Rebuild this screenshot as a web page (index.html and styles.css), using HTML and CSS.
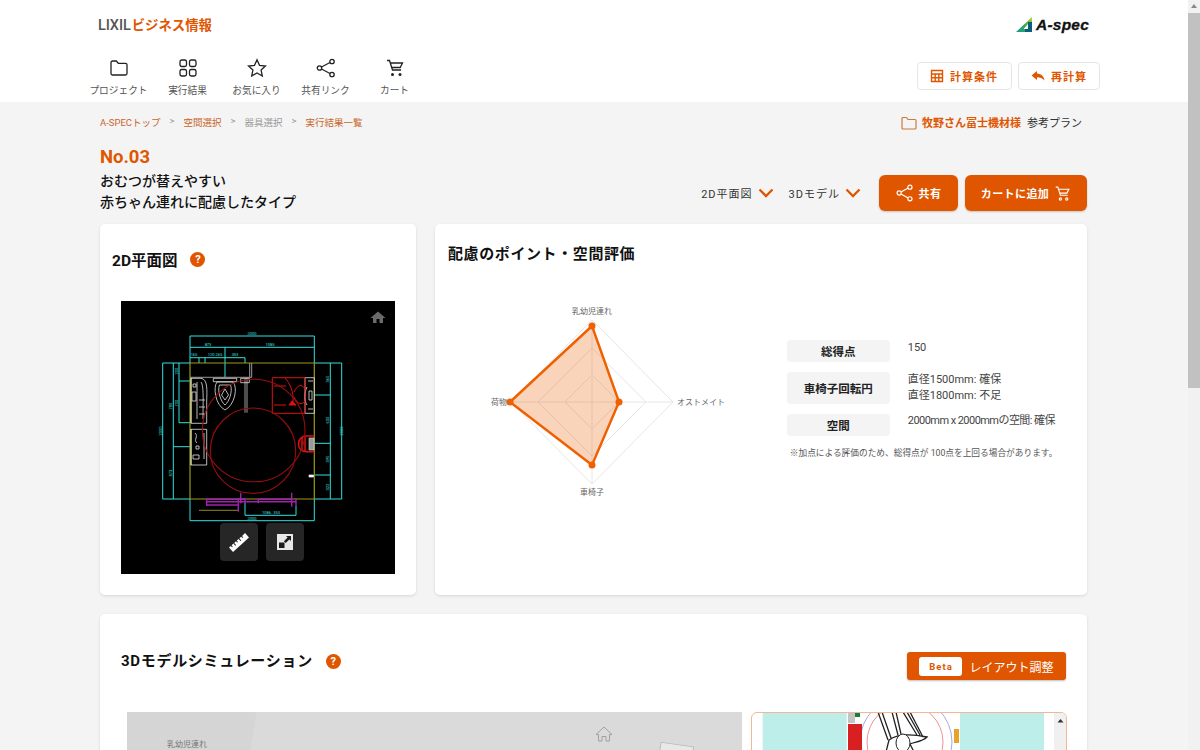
FILE: index.html
```html
<!DOCTYPE html>
<html lang="ja">
<head>
<meta charset="utf-8">
<title>A-spec 実行結果</title>
<link rel="stylesheet" href="styles.css">
</head>
<body>
<div class="app">
<div class="page">
  <header class="header">
    <div class="brand-row">
      <div class="brand"><span class="brand-lixil">LIXIL</span><span class="brand-jp">ビジネス情報</span></div>
      <div class="aspec">
        <svg class="aspec-mark" viewBox="0 0 17 16" width="17" height="16">
          <defs><linearGradient id="ag" x1="0" y1="1" x2="1" y2="0"><stop offset="0" stop-color="#0f9a9a"/><stop offset=".5" stop-color="#3aa850"/><stop offset="1" stop-color="#c8d428"/></linearGradient></defs>
          <path fill="url(#ag)" fill-rule="evenodd" d="M16 0V15H0ZM12 7 7.500 12H12Z"/>
          <path fill="#0b5f78" d="M12 5H16V15H9V12H12Z"/>
        </svg>
        <span class="aspec-text">A-spec</span>
      </div>
    </div>
    <div class="nav-row">
      <nav class="nav">
        <a class="nav-item"><svg viewBox="0 0 20 20" class="nav-icon"><path d="M2 4.500a1.500 1.500 0 0 1 1.500-1.500h3.800l2 2.300h7.200a1.500 1.500 0 0 1 1.500 1.500v8.700a1.500 1.500 0 0 1-1.500 1.500h-13a1.500 1.500 0 0 1-1.500-1.500z"/></svg><span>プロジェクト</span></a>
        <a class="nav-item"><svg viewBox="0 0 20 20" class="nav-icon"><rect x="2" y="2" width="6.500" height="6.500" rx="1.800"/><rect x="11.500" y="2" width="6.500" height="6.500" rx="1.800"/><rect x="2" y="11.500" width="6.500" height="6.500" rx="1.800"/><rect x="11.500" y="11.500" width="6.500" height="6.500" rx="1.800"/></svg><span>実行結果</span></a>
        <a class="nav-item"><svg viewBox="0 0 20 20" class="nav-icon"><path d="M10 1.800l2.500 5.500 6 .7-4.400 4.100 1.200 5.900-5.300-3-5.300 3 1.200-5.900L1.500 8l6-.7z"/></svg><span>お気に入り</span></a>
        <a class="nav-item"><svg viewBox="0 0 20 20" class="nav-icon"><circle cx="16" cy="3.500" r="2.200"/><circle cx="16" cy="16.500" r="2.200"/><circle cx="3.500" cy="10" r="2.200"/><path d="M5.500 9 14 4.500M5.500 11 14 15.500"/></svg><span>共有リンク</span></a>
        <a class="nav-item"><svg viewBox="0 0 20 20" class="nav-icon"><path d="M2 2.500h2.500l3 9.500h8.500M5 5h12.500l-2.300 4.500H6.500"/><circle class="solid" cx="7.500" cy="16.500" r="1.500"/><circle class="solid" cx="15" cy="16.500" r="1.500"/></svg><span>カート</span></a>
      </nav>
      <div class="head-actions">
        <button class="ghost-btn wide"><svg viewBox="0 0 14 14" width="14" height="14"><path class="grid-ic" d="M1.500 1.500h11v11h-11zM1.500 5h11M1.500 8.700h11M5.200 5v7.500M8.800 5v7.500"/></svg><span>計算条件</span></button>
        <button class="ghost-btn"><svg viewBox="0 0 14 12" width="14" height="12"><path fill="#e05500" d="M6 1 .5 5.500 6 10V7.200c3 0 5.500.6 7.500 3.300-.4-3.800-3-6.600-7.500-6.900z"/></svg><span>再計算</span></button>
      </div>
    </div>
  </header>

  <main class="content">
    <div class="crumb-row">
      <ol class="crumbs">
        <li class="on">A-SPECトップ</li><li class="sep">&gt;</li><li class="on">空間選択</li><li class="sep">&gt;</li><li class="off">器具選択</li><li class="sep">&gt;</li><li class="on">実行結果一覧</li>
      </ol>
      <div class="project"><svg viewBox="0 0 16 14" width="16" height="14"><path d="M1 2.500a1 1 0 0 1 1-1h3.500l1.500 2h7a1 1 0 0 1 1 1v7.500a1 1 0 0 1-1 1H2a1 1 0 0 1-1-1z"/></svg><b>牧野さん冨士機材様</b><span>参考プラン</span></div>
    </div>

    <div class="title-row">
      <div class="title-block">
        <div class="no">No.03</div>
        <h1 class="title">おむつが替えやすい<br>赤ちゃん連れに配慮したタイプ</h1>
      </div>
      <div class="title-actions">
        <a class="toggle">2D平面図<svg viewBox="0 0 16 10" width="16" height="10"><path d="M1.500 1.500 8 8l6.500-6.500"/></svg></a>
        <a class="toggle">3Dモデル<svg viewBox="0 0 16 10" width="16" height="10"><path d="M1.500 1.500 8 8l6.500-6.500"/></svg></a>
        <button class="solid-btn share"><svg viewBox="0 0 20 20" width="18" height="18"><circle cx="15.500" cy="3.500" r="2.300"/><circle cx="15.500" cy="16.500" r="2.300"/><circle cx="3.500" cy="10" r="2.300"/><path d="M5.500 9 13.500 4.500M5.500 11 13.500 15.500"/></svg><span>共有</span></button>
        <button class="solid-btn cart"><span>カートに追加</span><svg viewBox="0 0 20 20" width="17" height="17"><path d="M2 2.500h2.500l3 9.500h8.500M5 5h12.500l-2.300 4.500H6.500"/><circle cx="7.500" cy="16.500" r="1.300"/><circle cx="15" cy="16.500" r="1.300"/></svg></button>
      </div>
    </div>

    <div class="two-col">
      <section class="card plan-card">
        <div class="card-head"><h2>2D平面図</h2><span class="help">?</span></div>
        <div class="plan">
          <svg class="plan-svg" viewBox="0 0 275 273" width="275" height="273">
            <g class="dim">
              <path d="M69 35H193.300M69 46.300H193.300M69 56.700H124M69 35V62M193.300 35V62M104 46.300V76M78 56.700V62M84 56.700V62M124 56.700V62"/>
              <path d="M41.700 62H69M41.700 62V198M41.700 198H69M52.300 62V198M58 62V121.700M58 80H69M58 121.700H69M52.300 145.700H69"/>
              <path d="M193.300 62H220.700M193.300 198H220.700M220.700 62V198M209.300 62V198M193.300 94H209.300M193.300 142.300H209.300M193.300 174H209.300"/>
              <path d="M69 198V219.700M193.300 198V219.700M69 219.700H193.300M124 202V214.300M124 214.300H175M175 205V214.300"/>
            </g>
            <g class="dim-text">
              <text x="131" y="33.500">2000</text><text x="87" y="44.500">873</text><text x="149" y="44.500">1085</text><text x="73" y="55">165</text><text x="94" y="55">120 265</text><text x="114" y="55">353</text><text x="150" y="213">1086. 353</text><text x="131" y="218.500">2000</text>
              <text x="40.500" y="130" transform="rotate(-90 40.500 130)">2000</text><text x="51" y="105" transform="rotate(-90 51 105)">780</text><text x="51" y="172" transform="rotate(-90 51 172)">873</text><text x="57" y="102" transform="rotate(-90 57 102)">700</text><text x="57" y="70" transform="rotate(-90 57 70)">200</text>
              <text x="222" y="130" transform="rotate(-90 222 130)">2000</text><text x="208" y="78" transform="rotate(-90 208 78)">365</text><text x="208" y="119" transform="rotate(-90 208 119)">600</text><text x="208" y="158" transform="rotate(-90 208 158)">395</text><text x="208" y="186" transform="rotate(-90 208 186)">322</text>
            </g>
            <path class="wall" d="M69 62H193.300V198H69Z"/>
            <path class="wall2" d="M70 77V122M70 128V164"/>
            <path class="olive" d="M78 209.300H117.300"/>
            <path class="gray" d="M69 76.300H130.700V62M128.700 62V76M124 77V111.700M126 77V111.700"/>
            <g class="white">
              <path d="M92.300 77.300H115.700V80.700H92.300ZM96 81C92 86 94 104 104 109 114 104 117 86 112 81ZM98.500 84C96 90 100 101 104 104 108 101 112 90 109.500 84ZM104 88 100.500 94 104 99 107.500 94Z"/>
              <path d="M119.700 77.300H128.300V81.700H119.700Z"/>
              <path d="M70 77.300H80C87 78 86 90 85.700 100V122.300H70ZM76 81V118M80 81C83 85 82 100 82 118M72 83H75V86H72ZM71 91H75V100H71ZM78 99H84M78 106H84M78 113H84"/>
              <path d="M70 128.300H85.700V164H70ZM74 132C78 135 72 139 76 142M75 145H78V148H75ZM72 154H78V158H72ZM83 132V158"/>
              <path d="M184 76.700H193.300V112.300H184ZM187 80H192M187 108H192M186 86C183 92 183 100 186 104M188 90H191V99H188Z"/>
              <path class="white-fill" d="M188 174H192.500V176H188Z"/>
            </g>
            <g class="red">
              <path d="M151.300 76.700H184V112.300H151.300ZM153 85H165M153 104H165M164 77C169 82 173 91 172 102M173 91C177 83 181 83 184 88M173 96C177 104 181 104 184 100"/>
              <path class="red-fill" d="M171 100 175 104H168Z"/>
              <path class="red-thick" d="M193.300 135H185C180 135 177.500 139 177.500 143 177.500 147 180 150.700 185 150.700H193.300M181 137V149M184 135V150.700"/>
            </g>
            <path class="half" d="M188 137H193V149H188Z"/>
            <g class="red-line">
              <circle cx="132" cy="149.700" r="42.700"/>
              <circle cx="132.700" cy="129.500" r="51.300"/>
            </g>
            <path class="pink" d="M85.700 197.300V205M85.700 198.300H124M85.700 200.700H175.700M85.700 204H117.300M117.300 199V210.700M119.700 191.700V202.300M124 197V203M137.300 198.300V202.300M137.300 198.300H170.700M170.700 191.700V205.700M175 197.300V205"/>
            <path class="home" d="M257 10.500 249.500 17H252V22H255.500V18H258.500V22H262V17H264.500Z"/>
          </svg>
          <div class="plan-tools">
            <button class="tool"><svg viewBox="0 0 24 24" width="24" height="24"><path fill="#fff" d="M18 3 22 7.500 6 22 2 17.500 3.800 15.900 5 17.200 5.800 16.500 4.600 15.200 6.400 13.600 8.300 15.700 9.100 15 7.200 12.900 9 11.300 10.200 12.600 11 11.900 9.800 10.600 11.600 9 13.500 11.100 14.300 10.400 12.400 8.300 14.200 6.700 15.400 8 16.200 7.300 15 6Z"/></svg></button>
            <button class="tool"><svg viewBox="0 0 16 16" width="16" height="16"><path fill="#e8e8e8" d="M0 0H16V16H0Z"/><path fill="#1c1c1c" d="M2 8.500H7.500V14H2ZM9 2H14V7L12.400 5.400 8.700 9.100 6.900 7.300 10.600 3.600Z"/></svg></button>
          </div>
        </div>
      </section>

      <section class="card eval-card">
        <h2 class="eval-title">配慮のポイント・空間評価</h2>
        <div class="eval-body">
          <div class="radar">
            <svg viewBox="0 0 300 220" width="300" height="220">
              <g class="rings">
                <path d="M144 13 225 95 144 177 63 95Z"/>
                <path d="M144 41 198 95 144 149 90 95Z"/>
                <path d="M144 68 171 95 144 122 117 95Z"/>
                <path d="M144 13V177M63 95H225"/>
              </g>
              <path class="area" d="M144 19 171 95 144 158 62 95Z"/>
              <g class="dots"><circle cx="144" cy="19" r="3.500"/><circle cx="171" cy="95" r="3.500"/><circle cx="144" cy="158" r="3.500"/><circle cx="62" cy="95" r="3.500"/></g>
              <g class="labels">
                <text x="144" y="7" text-anchor="middle">乳幼児連れ</text>
                <text x="229" y="98">オストメイト</text>
                <text x="144" y="188" text-anchor="middle">車椅子</text>
                <text x="59" y="98" text-anchor="end">荷物</text>
              </g>
            </svg>
          </div>
          <div class="scores">
            <div class="score-row"><div class="score-key">総得点</div><div class="score-val">150</div></div>
            <div class="score-row"><div class="score-key tall">車椅子回転円</div><div class="score-val">直径1500mm: 確保<br>直径1800mm: 不足</div></div>
            <div class="score-row"><div class="score-key">空間</div><div class="score-val tight">2000mm x 2000mmの空間: 確保</div></div>
            <p class="note">※加点による評価のため、総得点が 100点を上回る場合があります。</p>
          </div>
        </div>
      </section>
    </div>

    <section class="card sim-card">
      <div class="sim-head">
        <div class="card-head sim-title"><h2>3Dモデルシミュレーション</h2><span class="help">?</span></div>
        <button class="layout-btn"><span class="beta">Beta</span><span>レイアウト調整</span></button>
      </div>
      <div class="sim-body">
        <div class="viewer">
          <span class="viewer-label">乳幼児連れ</span>
          <svg class="viewer-home" viewBox="0 0 18 16" width="18" height="16"><path d="M9 1 1 8.500H3.500V15H7V10.500H11V15H14.500V8.500H17Z"/></svg>
          <div class="viewer-sheet"></div>
        </div>
        <div class="thumbs">
          <svg viewBox="0 0 316 40" width="316" height="40" class="thumb-svg">
            <rect x="10.700" y="0" width="84" height="40" fill="#bdeeea"/>
            <rect x="208" y="0" width="84" height="40" fill="#bdeeea"/>
            <circle cx="154" cy="30" r="46" fill="#fff" stroke="#a8a8e0"/>
            <circle cx="153" cy="30" r="38" fill="none" stroke="#f09090"/>
            <rect x="96" y="0" width="7" height="11" fill="#c4c4c4"/>
            <rect x="103" y="0" width="5" height="5" fill="#14803c"/>
            <rect x="96" y="12" width="14" height="28" fill="#d82020"/>
            <rect x="202" y="17" width="5" height="14" fill="#e8a428"/>
            <path d="M126 0 136 28M130 0 139 26M140 0 146 23M144 0 149 22M151 0 165 23M155 0 168 23M158 0 171 25M137 28C145 22 160 22 175 25 170 30 162 30 158 32L162 40M137 28 134 40" fill="none" stroke="#222" stroke-width="1.300"/>
            <ellipse cx="151" cy="31" rx="7" ry="9" fill="#fff" stroke="#222"/>
            <rect x="302" y="0" width="13" height="40" fill="#f0f0f0"/>
            <path d="M308.500 7 311.500 10.500H305.500Z" fill="#333"/>
          </svg>
        </div>
      </div>
    </section>
  </main>
</div>
<div class="scrollbar"><span class="arrow"></span><span class="thumb"></span></div>
</div>
</body>
</html>
```

FILE: styles.css
```css
* { box-sizing: border-box; }
html, body { margin: 0; height: 100%; }
body {
  font-family: Roboto, "Noto Sans CJK JP", sans-serif;
  color: #222;
  overflow: hidden;
  background: #f4f4f4;
}
button { font-family: inherit; cursor: pointer; }
h1, h2, p, ol { margin: 0; padding: 0; }
.app { display: flex; height: 750px; overflow: hidden; }
.page { width: 1188px; flex: none; }

.scrollbar { width: 12px; flex: none; background: #f1f1f1; display: flex; flex-direction: column; }
.arrow { height: 13px; position: relative; }
.arrow::after { content: ""; position: absolute; left: 3px; top: 4px; border: 3px solid transparent; border-top: 0; border-bottom: 4px solid #888; }
.thumb { height: 375px; background: #c1c1c1; }

.header { background: #fff; height: 102px; }
.brand-row { display: flex; justify-content: space-between; align-items: center; height: 50px; padding: 0 99px 0 98px; }
.brand { display: flex; align-items: baseline; gap: 1px; font-weight: 700; margin-bottom: 2px; }
.brand-lixil { color: #555; font-size: 14.500px; font-weight: 500; letter-spacing: -0.1px; }
.brand-jp { color: #e05500; font-size: 13.400px; }
.aspec { display: flex; align-items: center; gap: 3px; }
.aspec-mark { display: block; }
.aspec-text { font: italic 700 15.500px "Liberation Sans", sans-serif; color: #111; letter-spacing: .2px; -webkit-text-stroke: .3px #111; }

.nav-row { display: flex; justify-content: space-between; padding: 0 88px 0 84px; }
.nav { display: flex; margin-top: 8px; }
.nav-item { width: 69px; display: flex; flex-direction: column; align-items: center; gap: 5px; font-size: 9.700px; color: #555; white-space: nowrap; }
.nav-icon { width: 20px; height: 20px; fill: none; stroke: #222; stroke-width: 1.300; display: block; }
.nav-icon .solid { fill: #222; stroke: none; }
.head-actions { display: flex; gap: 6px; margin-top: 12px; }
.ghost-btn {
  height: 28px; padding: 0 12px; display: flex; align-items: center; gap: 6px;
  background: #fff; border: 1px solid #e6e6e6; border-radius: 4px;
  color: #e05500; font-size: 11px; font-weight: 700; letter-spacing: 1px;
}
.ghost-btn.wide { padding: 0 13px 0 12px; }
.grid-ic { fill: none; stroke: #e05500; stroke-width: 1.400; }

.content { padding: 0 101px 0 100px; }
.crumb-row { display: flex; justify-content: space-between; align-items: center; height: 40px; }
.crumbs { display: flex; list-style: none; font-size: 9.500px; gap: 9px; }
.crumbs .on { color: #c9652a; }
.crumbs .off { color: #999; }
.crumbs .sep { color: #999; }
.project { display: flex; align-items: center; gap: 5px; font-size: 11px; padding-right: 5px; }
.project svg { fill: none; stroke: #d0773a; stroke-width: 1.200; margin-top: 2px; }
.project b { color: #e05500; font-weight: 700; }
.project span { margin-left: 1px; color: #333; }

.title-row { display: flex; justify-content: space-between; align-items: flex-end; height: 68px; margin-top: 2px; }
.title-block { margin-bottom: -1px; }
.no { font-size: 18.500px; font-weight: 700; color: #e05500; line-height: 27px; }
.title { font-size: 14px; font-weight: 500; line-height: 21px; color: #111; }
.title-actions { display: flex; align-items: center; gap: 15px; height: 36px; margin-bottom: 1px; }
.toggle { display: flex; align-items: center; gap: 5px; font-size: 11px; letter-spacing: 1px; color: #333; }
.toggle svg { fill: none; stroke: #e05500; stroke-width: 2.300; }
.toggle + .toggle { margin-right: 3px; }
.solid-btn {
  height: 36px; border: 0; border-radius: 6px; background: #e05500; color: #fff;
  display: flex; align-items: center; justify-content: center; font-size: 11px; font-weight: 700; letter-spacing: .4px;
  box-shadow: 0 1px 2px rgba(0,0,0,.2);
}
.solid-btn svg { fill: none; stroke: #fff; stroke-width: 1.300; }
.solid-btn.share { width: 79px; gap: 5px; margin-right: -8px; }
.solid-btn.cart { width: 122px; gap: 5px; }

.two-col { display: flex; gap: 19px; margin-top: 12px; }
.card { background: #fff; border-radius: 5px; box-shadow: 0 1px 3px rgba(0,0,0,.12); }
.plan-card { width: 316px; height: 371px; padding: 0 12px; }
.card-head { display: flex; align-items: center; gap: 13px; height: 70px; }
.card-head h2, .eval-title { font-size: 15.500px; font-weight: 700; color: #111; }
.help {
  width: 15px; height: 15px; border-radius: 50%; background: #e05500; color: #fff;
  font-size: 11px; font-weight: 700; display: flex; align-items: center; justify-content: center; line-height: 1;
}
.plan { width: 274px; height: 273px; margin: 7px 0 0 9px; background: #000; position: relative; }
.plan-svg { display: block; fill: none; }
.dim { stroke: #30e0e0; stroke-width: 1; }
.dim-text { fill: #3fe0e0; font-size: 4px; stroke: none; text-anchor: middle; }
.wall { stroke: #9a9a1a; stroke-width: 1.200; }
.wall2 { stroke: #e8e860; stroke-width: 1; }
.olive { stroke: #8a8a1a; stroke-width: 1; }
.gray { stroke: #9a9a9a; stroke-width: 1; }
.white { stroke: #e4e4e4; stroke-width: .8; }
.white-fill { fill: #fff; }
.red { stroke: #e01010; stroke-width: 1; }
.red-fill { fill: #e01010; }
.red-thick { stroke-width: 1.500; }
.half { fill: #999; stroke: #ddd; stroke-width: .6; }
.red-line { stroke: #960f0f; stroke-width: 1.100; }
.pink { stroke: #a020b0; stroke-width: 1.400; }
.home { fill: #6a6a6a; }
.plan-tools { position: absolute; left: 99px; bottom: 13px; display: flex; gap: 8px; }
.tool { width: 38px; height: 38px; border: 0; border-radius: 4px; background: #262626; display: flex; align-items: center; justify-content: center; padding: 0; }

.eval-card { width: 652px; height: 371px; padding: 19px 13px 0; }
.eval-title { font-size: 15px; letter-spacing: .6px; line-height: 22px; }
.eval-body { display: flex; margin-top: 42px; }
.radar { width: 342px; }
.radar svg { display: block; }
.rings path { fill: none; stroke: #e6e6e6; stroke-width: 1; }
.area { fill: rgba(240,110,30,.3); stroke: #ee6000; stroke-width: 2.400; stroke-linejoin: round; }
.dots circle { fill: #ee6000; }
.labels text { font-size: 8px; fill: #666; }
.scores { margin-top: 33px; width: 290px; display: flex; flex-direction: column; gap: 10px; }
.score-row { display: flex; gap: 18px; }
.score-key {
  width: 103px; height: 22px; background: #f4f4f4; border-radius: 4px; display: flex; align-items: center; justify-content: center;
  font-size: 11.500px; font-weight: 700; color: #222; flex: none;
}
.score-key.tall { height: 32px; }
.score-val { font-size: 11px; line-height: 16px; color: #444; white-space: nowrap; }
.score-val.tight { letter-spacing: -.55px; margin-top: -1px; }
.note { font-size: 8.700px; color: #555; margin: 0 0 0 3px; white-space: nowrap; line-height: 14px; }

.sim-card { margin-top: 19px; height: 300px; padding: 38px 21px 0 21px; }
.sim-head { display: flex; justify-content: space-between; align-items: flex-start; }
.sim-title { height: 18px; }
.sim-title h2 { font-size: 15px; letter-spacing: .7px; margin-top: -4px; }
.layout-btn {
  width: 159px; height: 28px; border: 0; border-radius: 3px; background: #e05500; color: #fff; font-size: 12px;
  display: flex; align-items: center; justify-content: center; gap: 7px; padding: 0; box-shadow: 0 1px 2px rgba(0,0,0,.25);
}
.beta { width: 43px; height: 19px; background: #fff; color: #e05500; border-radius: 3px; font-size: 9.500px; font-weight: 700; letter-spacing: 1px; display: flex; align-items: center; justify-content: center; }
.sim-body { display: flex; gap: 9px; margin: 32px 0 0 6px; }
.viewer { width: 616px; height: 120px; background: linear-gradient(100deg, #d5d5d5 20.300%, #dadada 20.500%); position: relative; overflow: hidden; }
.viewer-label { position: absolute; left: 40px; top: 28px; font-size: 8px; line-height: 10px; color: #777; }
.viewer-home { position: absolute; left: 468px; top: 14px; fill: none; stroke: #a0a0a0; stroke-width: 1; }
.viewer-sheet { position: absolute; left: 532px; top: 32px; width: 34px; height: 20px; background: #e8e8e8; border: 1px solid #bbb; transform: rotate(8deg); }
.thumbs { width: 316px; height: 120px; border: 1px solid #f2b795; border-radius: 6px; overflow: hidden; background: #fff; margin-right: -1px; }
.thumb-svg { display: block; margin: -1px 0 0 0; }
```
